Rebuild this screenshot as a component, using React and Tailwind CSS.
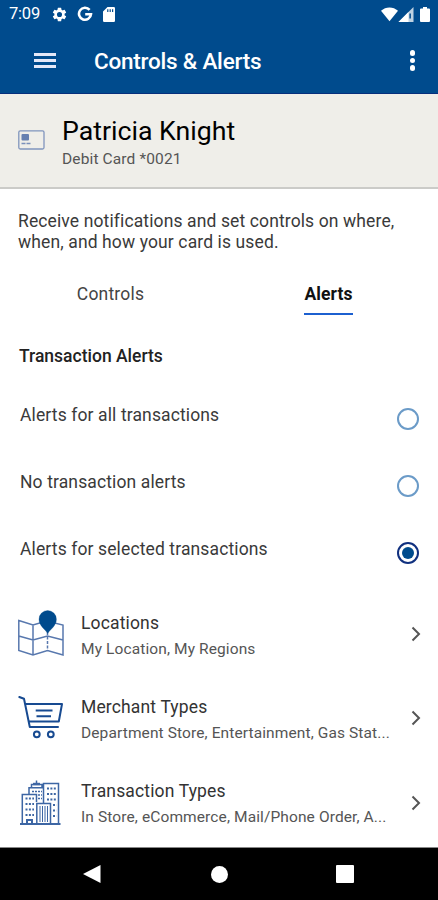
const sans = "font-['Roboto','Liberation_Sans',sans-serif]";

function GearIcon() {
  return (
    <svg viewBox="0 0 24 24" className="h-[17px] w-[17px]" fill="currentColor">
      <path d="M19.14 12.94c.04-.3.06-.61.06-.94s-.02-.64-.07-.94l2.03-1.58a.49.49 0 0 0 .12-.61l-1.92-3.32a.49.49 0 0 0-.59-.22l-2.39.96a7 7 0 0 0-1.62-.94l-.36-2.54a.48.48 0 0 0-.48-.41h-3.84a.48.48 0 0 0-.47.41l-.36 2.54c-.59.24-1.13.57-1.62.94l-2.39-.96a.48.48 0 0 0-.59.22L2.74 8.87a.48.48 0 0 0 .12.61l2.03 1.58c-.05.3-.09.63-.09.94s.02.64.07.94l-2.03 1.58a.49.49 0 0 0-.12.61l1.92 3.32c.12.22.37.29.59.22l2.39-.96c.5.38 1.03.7 1.62.94l.36 2.54c.05.24.24.41.48.41h3.84c.24 0 .44-.17.47-.41l.36-2.54a7 7 0 0 0 1.62-.94l2.39.96c.22.08.47 0 .59-.22l1.92-3.32a.48.48 0 0 0-.12-.61zM12 15.6a3.6 3.6 0 1 1 0-7.2 3.6 3.6 0 0 1 0 7.2z" />
    </svg>
  );
}

function StatusBar() {
  return (
    <div className="flex h-7 items-center pr-[8px] pl-[9px] text-white">
      <span className="w-[42px] text-[16.500px] leading-7 tracking-[-0.2px]">7:09</span>
      <GearIcon />
      <svg viewBox="0 0 16 16" className="ml-[9px] h-4 w-4" fill="none" stroke="currentColor" strokeWidth="2.6">
        <path d="M12.6 3.9A6 6 0 1 0 14 8.2H8.2" />
      </svg>
      <svg viewBox="0 0 12 15" className="ml-2.5 h-[15px] w-3" fill="currentColor">
        <path fillRule="evenodd" d="M4.5 0H10.8A1.2 1.2 0 0 1 12 1.2V13.8A1.2 1.2 0 0 1 10.8 15H1.2A1.2 1.2 0 0 1 0 13.8V4.5ZM4.2 2.3V4.9H5.4V2.3ZM6.6 2.3V4.9H7.8V2.3ZM9 2.3V4.9H10.2V2.3Z" />
      </svg>
      <svg viewBox="0 0 18 15" className="ml-auto h-[15px] w-[17px]" fill="currentColor">
        <path d="M0 3.6C5 -1.2 13 -1.2 18 3.6L9 14.6Z" />
      </svg>
      <svg viewBox="0 0 16 15" className="h-[15px] w-4" fill="currentColor">
        <path d="M15.5 0V15H.5Z" opacity=".75" />
        <path d="M10.5 5V15H.5Z" />
        <path d="M11.4 6.5h1.5v5h-1.5z" fill="#004b8d" />
      </svg>
      <svg viewBox="0 0 10 15" className="ml-1.5 h-[15px] w-2.5" fill="currentColor">
        <path d="M3 0h4v1.5h2a1 1 0 0 1 1 1V14a1 1 0 0 1-1 1H1a1 1 0 0 1-1-1V2.500a1 1 0 0 1 1-1h2z" />
      </svg>
    </div>
  );
}

function AppBar() {
  return (
    <div className="flex h-[65px] items-center pr-[23px] pl-[34px] text-white">
      <div className="flex w-[22px] flex-col gap-[3px]">
        <span className="h-[3px] bg-[#e4e8f8]" />
        <span className="h-[3px] bg-[#e4e8f8]" />
        <span className="h-[3px] bg-[#e4e8f8]" />
      </div>
      <h1 className="mt-[2px] ml-[38px] text-[22.500px] font-medium tracking-[-0.22px]">Controls &amp; Alerts</h1>
      <div className="ml-auto flex flex-col gap-[2px]">
        <span className="size-[5.500px] rounded-full bg-white" />
        <span className="size-[5.500px] rounded-full bg-white" />
        <span className="size-[5.500px] rounded-full bg-white" />
      </div>
    </div>
  );
}

function CardHeader() {
  return (
    <section className="flex h-[95px] border-b-2 border-[#cbcbc8] bg-[#efeee9] pl-[18px]">
      <svg viewBox="0 0 27 20" className="mt-[36px] h-5 w-[27px]" fill="none">
        <rect x=".8" y=".8" width="25.200" height="18.200" rx="1.500" stroke="#8095bd" strokeWidth="1.300" />
        <rect x="3.500" y="4" width="7.500" height="6.500" rx="1" fill="#6680b0" />
        <path d="M3.500 13.500h4M8.500 13.500h4" stroke="#7a90ba" strokeWidth="1.300" />
      </svg>
      <div className="ml-[17px] pt-[21px]">
        <h2 className="text-[26.700px] leading-8 text-black">Patricia Knight</h2>
        <p className="text-[15.500px] leading-[25px] tracking-[0.13px] text-[#555]">Debit Card *0021</p>
      </div>
    </section>
  );
}

function RadioRow({ label, selected }) {
  return (
    <label className="flex h-[67px] items-center pr-[19px] pl-5">
      <span className="mb-[9px] text-[17.500px] tracking-[0.12px] text-[#3a3a3a]">{label}</span>
      {selected ? (
        <span className="mb-[2px] ml-auto flex size-[22px] items-center justify-center rounded-full border-2 border-[#10307f]">
          <span className="size-3 rounded-full bg-[#004b8d]" />
        </span>
      ) : (
        <span className="mb-[2px] ml-auto size-[22px] rounded-full border-2 border-[#6b9bc8]" />
      )}
    </label>
  );
}

function MapIcon() {
  return (
    <svg viewBox="0 0 48 48" className="h-12 w-12" fill="none" stroke="#5878ae" strokeWidth="1.500">
      <path d="M.8 10.500 15 15 28.500 11 45 15V45L29.500 40.500 15 45 .8 40.500ZM15 15V45M.8 26 15 30 29.500 26 45 30" />
      <path d="M29.500 22V40.500" strokeDasharray="3 1.500" />
      <path d="M29.700 23.500C27.500 19.500 21 16 21 9.200A8.700 8.700 0 0 1 38.400 9.200C38.400 16 32 19.500 29.700 23.500Z" fill="#004b8d" stroke="#004b8d" strokeWidth=".3" />
    </svg>
  );
}

function CartIcon() {
  return (
    <svg viewBox="0 0 48 48" className="h-12 w-12" fill="none" stroke="#174a91" strokeWidth="2">
      <path d="M1.300 3 6 4.800 11.800 33H40" strokeLinecap="round" strokeLinejoin="round" />
      <path d="M7.500 10H44L40.800 27.500H11" strokeLinejoin="round" />
      <path d="M17.700 16.500H34.500M18.500 22.300H33" />
      <circle cx="18.800" cy="40.300" r="2.900" />
      <circle cx="32.800" cy="40.300" r="2.900" />
    </svg>
  );
}

function BuildingsIcon() {
  return (
    <svg viewBox="0 0 48 48" className="h-12 w-12" fill="none" stroke="#3d66a4" strokeWidth="1.500">
      <path d="M2 45H42.500" strokeWidth="1.800" />
      <path d="M4.300 44.500V15.500H18.500V23M11 15.500V8.800H25M13.500 8.500V5.500H24V8.500M18.500 5V1.500M25.500 24V4.500H40.500V44.500M18.800 44.500V24.500H32.500V44.500" />
      <path d="M15 5H22" strokeWidth="2.400" />
      <path d="M7.500 19.500H16M7.500 25H16M7.500 30.500H16M7.500 36H16M29 9.500H38M29 15H38M29 20.500H38M35 26H38.500M35 31.500H38.500M35 37H38.500" strokeWidth="1.800" strokeDasharray="2 1.400" />
      <path d="M14 12.500H24M20 16H24M20 19.500H24" strokeDasharray="2 1" />
      <path d="M22 27V43M24.500 27V43M27 27V43M29.500 27V43" strokeWidth="1" />
      <path d="M9 44.500V41H14V44.500" strokeWidth="2" />
    </svg>
  );
}

function AlertRow({ icon, title, detail }) {
  return (
    <div className="flex h-[84.400px] items-start pr-[17px] pl-[18px]">
      <div className="mt-[18px]">{icon}</div>
      <div className="ml-[15px] w-[320px] pt-[17.500px] whitespace-nowrap">
        <h4 className="text-[17.500px] leading-[26px] tracking-[0.15px] text-[#333]">{title}</h4>
        <p className="text-[15.500px] leading-[26px] tracking-[0.11px] text-[#555]">{detail}</p>
      </div>
      <svg viewBox="0 0 10 16" className="mt-[34px] ml-auto h-4 w-2.5" fill="none" stroke="#555" strokeWidth="2">
        <path d="M1.500 1.500 8 8 1.500 14.500" />
      </svg>
    </div>
  );
}

export default function App() {
  return (
    <div className={`${sans} flex h-[900px] w-[438px] flex-col overflow-hidden bg-white`}>
      <header className="h-[94px] shrink-0 border-b border-[#062f7c] bg-[#004b8d]">
        <StatusBar />
        <AppBar />
      </header>
      <CardHeader />
      <main className="h-[658px] shrink-0">
        <p className="h-[79px] pt-[22px] pl-[18px] text-[17.500px] leading-[21px] tracking-[0.12px] text-[#3a3a3a]">
          Receive notifications and set controls on where,
          <br />
          when, and how your card is used.
        </p>
        <nav className="grid h-[48px] grid-cols-2 text-[17.500px] leading-[26px]">
          <div className="flex justify-center pt-[13px] pl-[2px] tracking-[0.2px] text-[#444]">Controls</div>
          <div className="flex justify-center pt-[13px]">
            <span className="h-[34px] border-b-2 border-[#1c60d0] font-bold tracking-[0.1px] text-[#111]">Alerts</span>
          </div>
        </nav>
        <h3 className="h-[70px] pt-[27px] pl-[19px] text-[17.500px] leading-[26px] font-medium text-[#222]">Transaction Alerts</h3>
        <RadioRow label="Alerts for all transactions" />
        <RadioRow label="No transaction alerts" />
        <RadioRow label="Alerts for selected transactions" selected />
        <div className="pt-[5px]">
          <AlertRow icon={<MapIcon />} title="Locations" detail="My Location, My Regions" />
          <AlertRow icon={<CartIcon />} title="Merchant Types" detail="Department Store, Entertainment, Gas Stat..." />
          <AlertRow icon={<BuildingsIcon />} title="Transaction Types" detail="In Store, eCommerce, Mail/Phone Order, A..." />
        </div>
      </main>
      <footer className="flex flex-1 items-center border-t border-[#888] bg-black pl-[83px]">
        <svg viewBox="0 0 18 18" className="size-[18px]" fill="#fff">
          <path d="M0 9 17.500 0V18Z" />
        </svg>
        <span className="ml-[110px] size-[17px] rounded-full bg-white" />
        <span className="ml-[108px] size-[18px] rounded-[1px] bg-white" />
      </footer>
    </div>
  );
}
